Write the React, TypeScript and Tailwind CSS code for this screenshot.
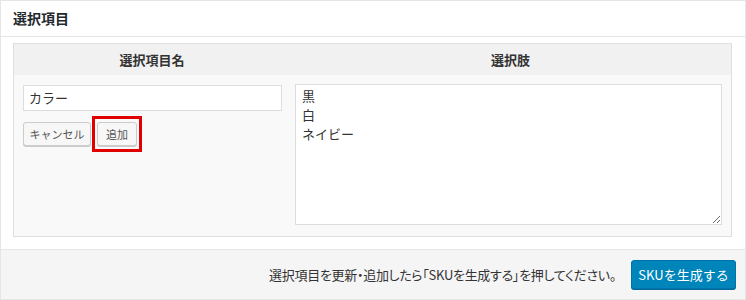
const font = { fontFamily: '"Noto Sans CJK JP", "Noto Sans", sans-serif' };

function SecondaryButton({ label, width }: { label: string; width: string }) {
  return (
    <button
      type="button"
      className={`${width} h-[24px] rounded-[3px] border border-[#cccccc] bg-[#f7f7f7] px-0 text-[11px] leading-[22px] text-[#555555] shadow-[0_1px_0_#cccccc]`}
    >
      {label}
    </button>
  );
}

export default function App() {
  return (
    <div className="h-[300px] w-[746px] bg-white text-[#333333]" style={font}>
      <div className="flex h-full flex-col border border-[#e5e5e5]">
        <div className="flex h-[36px] shrink-0 items-center border-b border-[#e5e5e5] px-[12px] text-[14px] font-bold text-[#23282d]">
          選択項目
        </div>

        <div className="px-[12px] pt-[6px]">
          <div className="w-[719px] border border-[#dfdfdf]">
            <div className="flex h-[31px] items-center bg-[#f1f1f1] text-[13px] font-bold text-[#333333]">
              <div className="w-[276px] text-center">選択項目名</div>
              <div className="flex-1 text-center">選択肢</div>
            </div>
            <div className="flex h-[161px] bg-[#f9f9f9]">
              <div className="w-[276px] px-[9px] pt-[9px]">
                <input
                  className="h-[26px] w-[259px] border border-[#dddddd] bg-white px-[5px] text-[13px] text-[#333333] outline-none"
                  defaultValue="カラー"
                />
                <div className="mt-[5px] flex items-center gap-[1px]">
                  <SecondaryButton label="キャンセル" width="w-[68px]" />
                  <div className="border-[3px] border-[#e10000] px-[2px] pt-[1px] pb-[3px]">
                    <SecondaryButton label="追加" width="w-[40px]" />
                  </div>
                </div>
              </div>
              <div className="flex-1 pl-[5px] pr-[9px] pt-[9px]">
                <textarea
                  className="h-[141px] w-[427px] resize-y border border-[#dddddd] bg-white px-[6px] py-[1px] text-[13px] leading-[19px] text-[#333333] outline-none"
                  defaultValue={"黒\n白\nネイビー"}
                />
              </div>
            </div>
          </div>
        </div>

        <div className="mt-auto flex h-[50px] items-center justify-end gap-[15px] border-t border-[#e5e5e5] bg-[#f5f5f5] pr-[9px]">
          <span className="text-[13px] tracking-[-0.3px] text-[#333333] [font-feature-settings:'palt']">
            選択項目を更新・追加したら「SKUを生成する」を押してください。
          </span>
          <button
            type="button"
            className="h-[29px] w-[105px] rounded-[3px] border border-[#0073aa] bg-[#0085ba] text-[13px] text-white shadow-[0_1px_0_#006799]"
          >
            SKUを生成する
          </button>
        </div>
      </div>
    </div>
  );
}
